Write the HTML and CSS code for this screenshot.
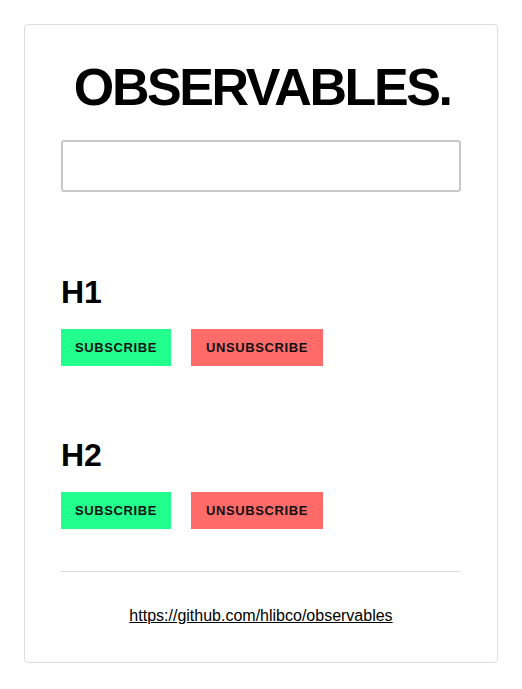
FILE: index.html
```html
<!DOCTYPE html>
<html>
<head>
<meta charset="utf-8">
<link rel="stylesheet" href="styles.css">
</head>
<body>
<div class="card">
  <h1 class="title">OBSERVABLES.</h1>
  <input class="field" type="text">
  <section class="group">
    <h2 class="group-title">H1</h2>
    <div class="actions">
      <button class="btn btn-sub">SUBSCRIBE</button>
      <button class="btn btn-unsub">UNSUBSCRIBE</button>
    </div>
  </section>
  <section class="group">
    <h2 class="group-title">H2</h2>
    <div class="actions">
      <button class="btn btn-sub">SUBSCRIBE</button>
      <button class="btn btn-unsub">UNSUBSCRIBE</button>
    </div>
  </section>
  <hr class="divider">
  <div class="footer"><a class="link" href="#">https://github.com/hlibco/observables</a></div>
</div>
</body>
</html>
```
FILE: styles.css
```css
html, body { margin: 0; padding: 0; background: #fff; }
body {
  padding: 24px;
  font-family: "Liberation Sans", Arial, sans-serif;
  color: #000;
}
.card {
  border: 1px solid #dcdcdc;
  border-radius: 4px;
  padding: 32px 36px 0 36px;
  height: 639px;
  box-sizing: border-box;
}
.title {
  margin: 0;
  font-size: 52px;
  line-height: 60px;
  font-weight: bold;
  text-align: center;
  letter-spacing: -2.4px;
  text-indent: 2.4px;
}
.field {
  display: block;
  box-sizing: border-box;
  width: 100%;
  height: 52px;
  margin: 23px 0 0 0;
  border: 2px solid #c8c8c8;
  border-radius: 3px;
  background: #fff;
  outline: none;
}
.group { margin-top: 82px; }
.group + .group { margin-top: 71px; }
.group-title {
  margin: 0;
  font-size: 32px;
  line-height: 37px;
  font-weight: bold;
}
.actions {
  display: flex;
  gap: 20px;
  margin-top: 18px;
}
.btn {
  border: none;
  height: 37px;
  padding: 0 14px;
  font-family: "Liberation Sans", Arial, sans-serif;
  font-size: 13px;
  font-weight: bold;
  letter-spacing: 0.6px;
  color: #111;
  cursor: pointer;
}
.btn-sub { background: #22ff8d; width: 110px; }
.btn-unsub { background: #ff6b69; width: 132px; }
.divider {
  margin: 42px 0 0 0;
  border: none;
  border-top: 1px solid #dcdcdc;
  height: 0;
}
.footer {
  text-align: center;
  margin-top: 35px;
  font-size: 16px;
  line-height: 18px;
}
.link { color: #000; text-decoration: underline; }
```
